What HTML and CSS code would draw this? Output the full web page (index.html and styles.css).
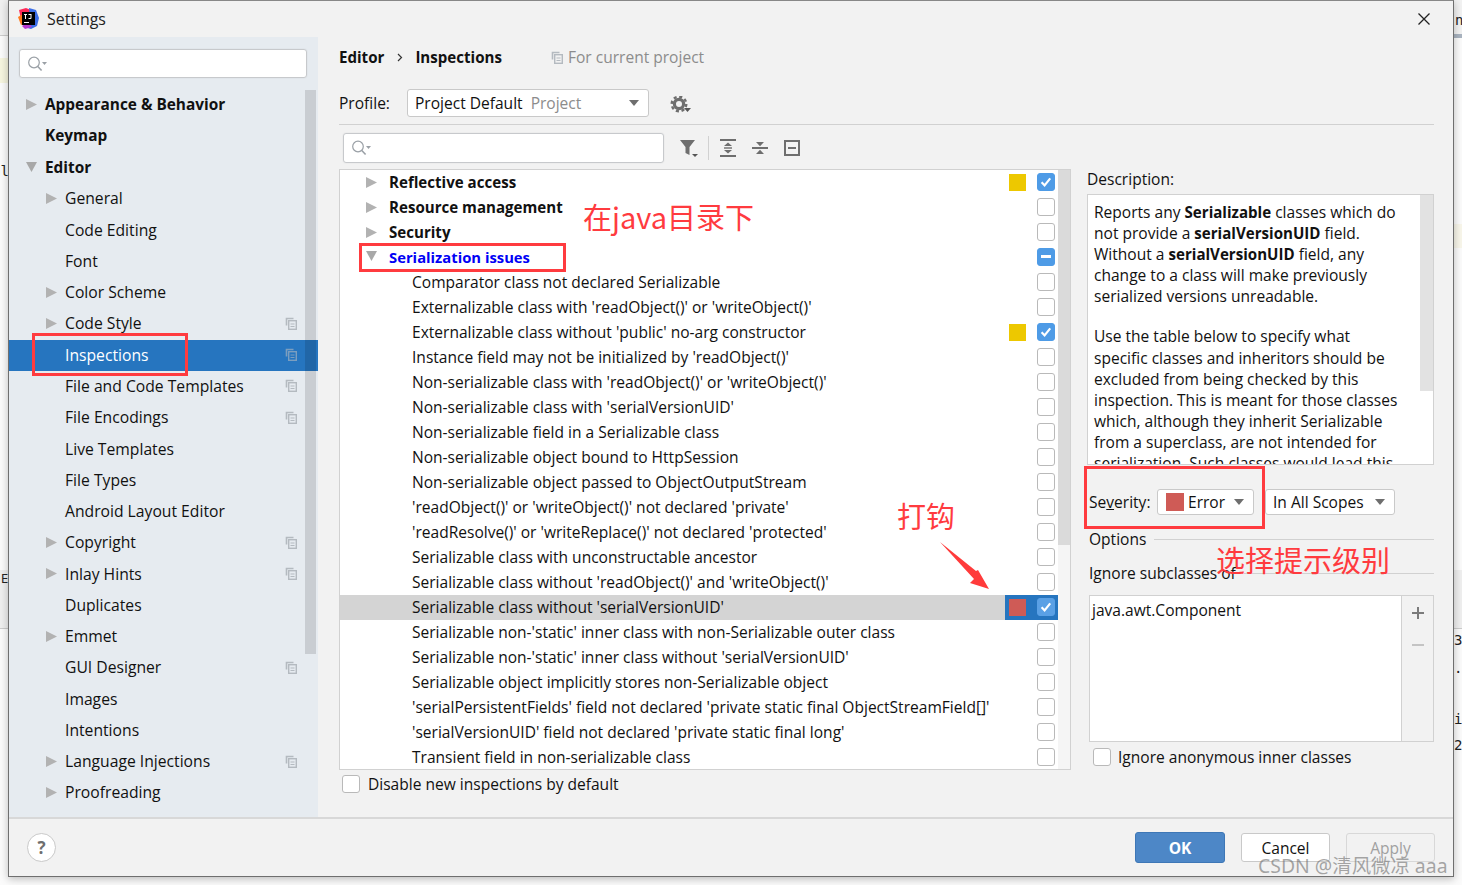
FILE: index.html
```html
<!DOCTYPE html>
<html lang="en">
<head>
<meta charset="utf-8">
<title>Settings</title>
<link rel="stylesheet" href="styles.css">
</head>
<body>
<svg class="defs" width="0" height="0">
  <defs>
    <symbol id="copy" viewBox="0 0 12 13"><path d="M1.5 8.5V1.5H8.5" fill="none" stroke="#b4bac0" stroke-width="1.6"/><rect x="3.7" y="3.7" width="7.6" height="8.6" fill="none" stroke="#b4bac0" stroke-width="1.4"/><path d="M5.5 7h4M5.5 9.5h4" stroke="#b4bac0" stroke-width="1.2"/></symbol>
    <symbol id="search" viewBox="0 0 20 16"><circle cx="7" cy="6.5" r="5.3" fill="none" stroke="#9aa0a6" stroke-width="1.2"/><path d="M10.8 10.5l3.8 4" stroke="#9aa0a6" stroke-width="1.6"/><path d="M15 6h5l-2.5 3z" fill="#9aa0a6"/></symbol>
    <symbol id="right" viewBox="0 0 11 11"><path d="M0 0l11 5.5L0 11z" fill="#b2b2b2"/></symbol>
    <symbol id="down" viewBox="0 0 11 11"><path d="M0 0h11L5.5 10z" fill="#a8a8a8"/></symbol>
    <symbol id="check" viewBox="0 0 18 18"><path d="M4.6 9.2l3 3.2 5.6-7" fill="none" stroke="#fff" stroke-width="2.2"/></symbol>
  </defs>
</svg>
<div class="desk">
  <div class="bg bg-top-l"></div><div class="bg bg-yellow-l"></div><div class="bg bg-tab-l"></div>
  <div class="bg bg-top-r"></div><div class="bg bg-yellow-r"></div><div class="bg bg-tab-r"></div>
  <span class="bgt t-nl">nl</span><span class="bgt t-e">E</span><span class="bgt t-n">n</span>
  <span class="bgt t-3">3</span><span class="bgt t-dot">.</span><span class="bgt t-i">i</span><span class="bgt t-2">2</span>

  <div class="dialog">
    <header class="titlebar">
      <svg class="logo" width="21" height="21" viewBox="0 0 21 21">
        <path d="M1 2l7-2 5 2-3 8-7 1z" fill="#fe2857"/>
        <path d="M0 9l5-3 4 9-6 2z" fill="#ff7a1c"/>
        <path d="M11 0l7 2 3 8-2 8-6 3-7-2 6-8z" fill="#3c6ee6"/>
        <path d="M4 18l6-4 4 5-7 2z" fill="#b63bd0"/>
        <rect x="4" y="4" width="13" height="13" fill="#000"/>
        <path d="M6 6h3v1H8v4H7V7H6zM10.5 6h3v4q0 1-1 1h-2v-1h2V6.900h-2z" fill="#fff"/>
        <rect x="6" y="14" width="5" height="1" fill="#fff"/>
      </svg>
      <span class="title">Settings</span>
      <svg class="close" width="14" height="14" viewBox="0 0 14 14"><path d="M1.500 1.500l11 11M12.500 1.500l-11 11" stroke="#222" stroke-width="1.300"/></svg>
    </header>

    <div class="body">
      <aside class="side">
        <div class="searchbox side-search"><svg width="20" height="16"><use href="#search"/></svg></div>
        <div class="tree">
          <div class="scroll-side"></div>
          <div class="node b"><svg class="arrow"><use href="#right"/></svg>Appearance &amp; Behavior</div>
          <div class="node b">Keymap</div>
          <div class="node b"><svg class="arrow"><use href="#down"/></svg>Editor</div>
          <div class="node c"><svg class="arrow"><use href="#right"/></svg>General</div>
          <div class="node c">Code Editing</div>
          <div class="node c">Font</div>
          <div class="node c"><svg class="arrow"><use href="#right"/></svg>Color Scheme</div>
          <div class="node c"><svg class="arrow"><use href="#right"/></svg>Code Style<svg class="copy"><use href="#copy"/></svg></div>
          <div class="node c sel">Inspections<svg class="copy"><use href="#copy"/></svg></div>
          <div class="node c">File and Code Templates<svg class="copy"><use href="#copy"/></svg></div>
          <div class="node c">File Encodings<svg class="copy"><use href="#copy"/></svg></div>
          <div class="node c">Live Templates</div>
          <div class="node c">File Types</div>
          <div class="node c">Android Layout Editor</div>
          <div class="node c"><svg class="arrow"><use href="#right"/></svg>Copyright<svg class="copy"><use href="#copy"/></svg></div>
          <div class="node c"><svg class="arrow"><use href="#right"/></svg>Inlay Hints<svg class="copy"><use href="#copy"/></svg></div>
          <div class="node c">Duplicates</div>
          <div class="node c"><svg class="arrow"><use href="#right"/></svg>Emmet</div>
          <div class="node c">GUI Designer<svg class="copy"><use href="#copy"/></svg></div>
          <div class="node c">Images</div>
          <div class="node c">Intentions</div>
          <div class="node c"><svg class="arrow"><use href="#right"/></svg>Language Injections<svg class="copy"><use href="#copy"/></svg></div>
          <div class="node c"><svg class="arrow"><use href="#right"/></svg>Proofreading</div>
        </div>
      </aside>

      <main class="main">
        <div class="crumbs">
          <strong>Editor</strong>
          <svg class="chev" width="6" height="9" viewBox="0 0 6 9"><path d="M1 1l3.500 3.500L1 8" fill="none" stroke="#333" stroke-width="1.200"/></svg>
          <strong>Inspections</strong>
          <svg class="copy crumb-copy"><use href="#copy"/></svg>
          <span class="muted">For current project</span>
        </div>
        <div class="profile">
          <span class="profile-label">Profile:</span>
          <div class="combo profile-combo"><span>Project Default</span><span class="muted">Project</span><i class="caret"></i></div>
          <svg class="gear" width="22" height="20" viewBox="0 0 22 20"><circle cx="9" cy="8" r="4.600" fill="none" stroke="#6e6e6e" stroke-width="3.200"/><circle cx="9" cy="8" r="7.300" fill="none" stroke="#6e6e6e" stroke-width="2.400" stroke-dasharray="3.100 2.630"/><path d="M14 12h7l-3.500 4z" fill="#555"/></svg>
        </div>
        <div class="columns">
          <section class="left">
            <div class="toolbar">
              <div class="searchbox list-search"><svg width="20" height="16"><use href="#search"/></svg></div>
              <svg class="tool filter" width="20" height="20" viewBox="0 0 20 20"><path d="M1 2h15l-5.500 7v8l-4-2V9z" fill="#6e6e6e"/><path d="M13 16h6l-3 3z" fill="#555"/></svg>
              <i class="tool-sep"></i>
              <svg class="tool" width="16" height="18" viewBox="0 0 16 18"><path d="M0 1h16M0 17h16" stroke="#6e6e6e" stroke-width="2"/><path d="M8 3.500l4 3.500H4zM8 14.500l4-3.500H4z" fill="#6e6e6e"/><path d="M4 9h8" stroke="#6e6e6e" stroke-width="1.400"/></svg>
              <svg class="tool" width="16" height="18" viewBox="0 0 16 18"><path d="M0 9h16" stroke="#6e6e6e" stroke-width="2"/><path d="M8 7.200L4 3h8zM8 10.800l4 4.200H4z" fill="#6e6e6e"/></svg>
              <svg class="tool" width="16" height="16" viewBox="0 0 16 16"><rect x="1" y="1" width="14" height="14" fill="none" stroke="#6e6e6e" stroke-width="2"/><path d="M4 8h8" stroke="#6e6e6e" stroke-width="2"/></svg>
            </div>
            <div class="list">
              <div class="row g"><svg class="arrow"><use href="#right"/></svg><span class="label">Reflective access</span><i class="sq warn"></i><i class="cb on"><svg><use href="#check"/></svg></i></div>
              <div class="row g"><svg class="arrow"><use href="#right"/></svg><span class="label">Resource management</span><i class="cb"></i></div>
              <div class="row g"><svg class="arrow"><use href="#right"/></svg><span class="label">Security</span><i class="cb"></i></div>
              <div class="row g blue"><svg class="arrow"><use href="#down"/></svg><span class="label">Serialization issues</span><i class="cb on"><b class="dash"></b></i></div>
              <div class="row"><span class="label">Comparator class not declared Serializable</span><i class="cb"></i></div>
              <div class="row"><span class="label">Externalizable class with 'readObject()' or 'writeObject()'</span><i class="cb"></i></div>
              <div class="row"><span class="label">Externalizable class without 'public' no-arg constructor</span><i class="sq warn"></i><i class="cb on"><svg><use href="#check"/></svg></i></div>
              <div class="row"><span class="label">Instance field may not be initialized by 'readObject()'</span><i class="cb"></i></div>
              <div class="row"><span class="label">Non-serializable class with 'readObject()' or 'writeObject()'</span><i class="cb"></i></div>
              <div class="row"><span class="label">Non-serializable class with 'serialVersionUID'</span><i class="cb"></i></div>
              <div class="row"><span class="label">Non-serializable field in a Serializable class</span><i class="cb"></i></div>
              <div class="row"><span class="label">Non-serializable object bound to HttpSession</span><i class="cb"></i></div>
              <div class="row"><span class="label">Non-serializable object passed to ObjectOutputStream</span><i class="cb"></i></div>
              <div class="row"><span class="label">'readObject()' or 'writeObject()' not declared 'private'</span><i class="cb"></i></div>
              <div class="row"><span class="label">'readResolve()' or 'writeReplace()' not declared 'protected'</span><i class="cb"></i></div>
              <div class="row"><span class="label">Serializable class with unconstructable ancestor</span><i class="cb"></i></div>
              <div class="row"><span class="label">Serializable class without 'readObject()' and 'writeObject()'</span><i class="cb"></i></div>
              <div class="row cur"><span class="label">Serializable class without 'serialVersionUID'</span><span class="cur-tail"><i class="sq err"></i><i class="cb on cur-cb"><svg><use href="#check"/></svg></i></span></div>
              <div class="row"><span class="label">Serializable non-'static' inner class with non-Serializable outer class</span><i class="cb"></i></div>
              <div class="row"><span class="label">Serializable non-'static' inner class without 'serialVersionUID'</span><i class="cb"></i></div>
              <div class="row"><span class="label">Serializable object implicitly stores non-Serializable object</span><i class="cb"></i></div>
              <div class="row"><span class="label">'serialPersistentFields' field not declared 'private static final ObjectStreamField[]'</span><i class="cb"></i></div>
              <div class="row"><span class="label">'serialVersionUID' field not declared 'private static final long'</span><i class="cb"></i></div>
              <div class="row"><span class="label">Transient field in non-serializable class</span><i class="cb"></i></div>
              <div class="list-scroll"></div>
            </div>
            <label class="check-line disable"><i class="cb"></i>Disable new inspections by default</label>
          </section>

          <section class="right">
            <div class="desc-label">Description:</div>
            <div class="desc">
              <div class="desc-text">
                <p>Reports any <b>Serializable</b> classes which do not provide a <b>serialVersionUID</b> field. Without a <b>serialVersionUID</b> field, any change to a class will make previously serialized versions unreadable.</p>
                <p>Use the table below to specify what specific classes and inheritors should be excluded from being checked by this inspection. This is meant for those classes which, although they inherit Serializable from a superclass, are not intended for serialization. Such classes would lead this</p>
              </div>
              <div class="desc-scroll"></div>
            </div>
            <div class="severity">
              <span>Se<u>v</u>erity:</span>
              <div class="combo sev-combo"><i class="sq err big"></i><span>Error</span><i class="caret"></i></div>
              <div class="combo scope-combo"><span>In All Scopes</span><i class="caret"></i></div>
            </div>
            <div class="titled options"><span>Options</span><i></i></div>
            <div class="titled ignore"><span>Ignore subclasses of</span><i></i></div>
            <div class="table">
              <div class="table-body">java.awt.Component</div>
              <div class="table-tools">
                <svg width="14" height="14" viewBox="0 0 14 14"><path d="M7 1v12M1 7h12" stroke="#7b7b7b" stroke-width="2"/></svg>
                <svg width="14" height="14" viewBox="0 0 14 14"><path d="M1 7h12" stroke="#c4c4c4" stroke-width="2"/></svg>
              </div>
            </div>
            <label class="check-line anon"><i class="cb"></i>Ignore anonymous inner classes</label>
          </section>
        </div>
      </main>
    </div>

    <footer class="footer">
      <div class="help">?</div>
      <div class="buttons">
        <button class="btn ok">OK</button>
        <button class="btn">Cancel</button>
        <button class="btn off">Apply</button>
      </div>
    </footer>
  </div>

  <div class="mark m-insp"></div>
  <div class="mark m-ser"></div>
  <div class="mark m-sev"></div>
  <span class="note n-java">在java目录下</span>
  <span class="note n-check">打钩</span>
  <span class="note n-level">选择提示级别</span>
  <svg class="note-arrow" width="56" height="56" viewBox="0 0 56 56"><path d="M1 1L37 30l2-1 11 19-19-6 4-4z" fill="#ff3b3b"/></svg>
  <span class="watermark">CSDN @清风微凉 aaa</span>
</div>
</body>
</html>
```

FILE: styles.css
```css
* { box-sizing: border-box; }
html, body { margin: 0; padding: 0; }
body { width: 1462px; height: 885px; overflow: hidden; background: #fff; font-family: "Open Sans", "Noto Sans", sans-serif; font-size: 15.55px; color: #111; }
b, strong { font-size: 15.1px; }
.defs { position: absolute; }
.desk { position: relative; width: 1462px; height: 885px; overflow: hidden; background: #fbfbfb; }

.bg { position: absolute; }
.bg-top-l { left: 0; top: 0; width: 9px; height: 36px; background: #f0f0f0; border-bottom: 1px solid #ccc; }
.bg-yellow-l { left: 0; top: 58px; width: 9px; height: 25px; background: #f6f5df; }
.bg-tab-l { left: 0; top: 570px; width: 9px; height: 59px; background: #efefef; border-bottom: 1px solid #ccc; }
.bg-top-r { left: 1454px; top: 0; width: 8px; height: 38px; background: #f2f2f2; border-bottom: 4px solid #a9b4c0; }
.bg-yellow-r { left: 1454px; top: 224px; width: 8px; height: 24px; background: #f8f6ea; }
.bg-tab-r { left: 1454px; top: 570px; width: 8px; height: 59px; background: #efefef; border-bottom: 1px solid #ccc; }
.bgt { position: absolute; font-family: "DejaVu Sans Mono", monospace; font-size: 14px; line-height: 16px; color: #222; }
.t-nl { left: 0; top: 163px; width: 9px; overflow: hidden; direction: rtl; }
.t-e { left: 1px; top: 571px; font-size: 12px; }
.t-n { left: 1455px; top: 12px; }
.t-3 { left: 1454px; top: 632px; }
.t-dot { left: 1454px; top: 660px; }
.t-i { left: 1454px; top: 711px; }
.t-2 { left: 1454px; top: 737px; }

.dialog { position: absolute; left: 8px; top: 0; width: 1446px; height: 877px; display: flex; flex-direction: column; background: #f2f2f2; border: 1px solid #6f6f6f; border-top-color: #888; box-shadow: 0 2px 8px rgba(0,0,0,.25); }

.titlebar { height: 36px; flex: none; display: flex; align-items: center; padding: 0 22px 0 9px; }
.logo { flex: none; margin-top: -2px; }
.title { margin-left: 8px; font-size: 15.9px; color: #222; }
.close { margin-left: auto; }

.body { height: 780px; flex: none; display: flex; }
.side { width: 309px; flex: none; background: #e6ebf0; display: flex; flex-direction: column; overflow: hidden; font-size: 15.7px; }
.searchbox { background: #fff; border: 1px solid #c7c9cc; border-radius: 3px; display: flex; align-items: center; padding-left: 7px; box-shadow: 0 0 0 1px rgba(0,0,0,.02); }
.side-search { width: 288px; height: 29px; margin: 12px 0 0 10px; flex: none; }
.tree { position: relative; margin-top: 12px; flex: 1; overflow: hidden; }
.scroll-side { position: absolute; right: 2px; top: 0; width: 11px; height: 564px; background: rgba(0,0,0,.125); z-index: 2; }
.node { height: 31.27px; display: flex; align-items: center; position: relative; white-space: nowrap; padding-bottom: 2px; }
.node.b { padding-left: 36px; font-weight: 700; font-size: 15.4px; }
.node.c { padding-left: 56px; }
.node .arrow { position: absolute; width: 11px; height: 11px; top: 9px; }
.node.b .arrow { left: 17px; }
.node.c .arrow { left: 37px; }
.node .copy { position: absolute; width: 12px; height: 13px; left: 276px; top: 8px; z-index: 3; }
.node.sel { background: #2675bf; color: #fff; }
.node.sel .copy { opacity: .6; }

.main { flex: 1; padding: 0 19px 0 21px; display: flex; flex-direction: column; min-width: 0; }
.crumbs { height: 40px; display: flex; align-items: center; flex: none; }
.chev { margin: 0 12px 0 13px; }
.crumb-copy { width: 12px; height: 13px; margin: 0 5px 0 49px; }
.muted { color: #8c8c8c; }
.profile { display: flex; align-items: center; border-bottom: 1px solid #d1d1d1; flex: none; margin-top: 5px; padding-bottom: 1px; height: 43px; }
.profile-label { width: 68px; }
.combo { background: #fff; border: 1px solid #c9c9c9; border-radius: 3px; display: flex; align-items: center; position: relative; white-space: nowrap; }
.caret { position: absolute; border-left: 5.5px solid transparent; border-right: 5.5px solid transparent; border-top: 6px solid #6e6e6e; top: 50%; margin-top: -3px; }
.profile-combo { width: 242px; height: 28px; padding-left: 7px; gap: 8px; }
.profile-combo .caret { right: 9px; }
.gear { margin: 6px 0 0 21px; }

.columns { flex: 1; display: flex; min-height: 0; }
.left { width: 732px; flex: none; display: flex; flex-direction: column; }
.toolbar { height: 44px; display: flex; align-items: center; padding: 0 0 0 4px; flex: none; }
.list-search { width: 321px; height: 30px; flex: none; margin-top: 1px; }
.filter { margin-left: 15px; }
.tool-sep { width: 1px; height: 24px; background: #d1d1d1; margin: 2px 11px 0 9px; }
.tool { margin: 2px 16px 0 0; flex: none; }
.filter { margin-right: 0; margin-left: 15px; }

.list { position: relative; height: 601px; flex: none; background: #fff; border: 1px solid #d1d1d1; padding-right: 12px; overflow: hidden; }
.list::after { content: ""; position: absolute; right: 0; top: 0; bottom: 0; width: 12px; background: #f5f5f5; }
.list-scroll { position: absolute; right: 0; top: 0; width: 12px; height: 375px; background: #dadada; z-index: 1; }
.row { height: 25px; display: flex; align-items: center; position: relative; white-space: nowrap; padding-bottom: 1px; }
.label { margin-left: 72px; }
.row.g .label { margin-left: 49px; font-weight: 700; font-size: 15.1px; }
.row.blue .label { color: #0000f5; font-size: 14.8px; }
.row .arrow { position: absolute; left: 26px; top: 7px; width: 11px; height: 11px; }
.row.blue .arrow { top: 6px; }
.sq { display: block; width: 17px; height: 17px; flex: none; }
.warn { background: #edc800; }
.err { background: #cf5b56; }
.row > .sq { position: absolute; left: 669px; top: 4px; }
.cb { display: block; width: 18px; height: 18px; flex: none; background: #fff; border: 1px solid #b9b9b9; border-radius: 3px; position: relative; }
.row > .cb { position: absolute; left: 697px; top: 3px; }
.cb.on { background: #4e9be6; border-color: #4e9be6; }
.cb svg { position: absolute; left: -1px; top: -1px; width: 18px; height: 18px; }
.dash { position: absolute; left: 3px; top: 6px; width: 10px; height: 3px; background: #fff; }
.row.cur { background: #d4d4d4; }
.cur-tail { position: absolute; left: 665px; top: 0; width: 53px; height: 25px; background: #2675bf; }
.cur-tail .sq { position: absolute; left: 4px; top: 4px; }
.cur-tail .cb { position: absolute; left: 32px; top: 3px; background: #5aa0e5; border-color: #5aa0e5; }
.check-line { display: flex; align-items: center; white-space: nowrap; }
.disable { height: 28px; margin-left: 3px; gap: 8px; }

.right { flex: 1; margin-left: 16px; min-width: 0; display: flex; flex-direction: column; padding-top: 45px; }
.desc-label { height: 24px; line-height: 18px; flex: none; }
.desc { position: relative; height: 271px; flex: none; background: #fff; border: 1px solid #d1d1d1; overflow: hidden; padding: 7px 0 0 6px; }
.desc-text { width: 310px; line-height: 21.1px; }
.desc-text p { margin: 0 0 19px; }
.desc-scroll { position: absolute; right: 0; top: 0; width: 13px; height: 196px; background: #e2e2e2; }
.severity { height: 74px; flex: none; display: flex; align-items: center; margin-left: 2px; }
.severity span:first-child { width: 68px; }
.sev-combo { width: 97px; height: 26px; padding-left: 8px; gap: 4px; }
.sq.big { width: 18px; height: 18px; }
.sev-combo .caret { right: 9px; }
.scope-combo { width: 130px; height: 26px; margin-left: 11px; padding-left: 7px; }
.scope-combo .caret { right: 9px; }
.titled { display: flex; align-items: center; margin-left: 2px; flex: none; }
.titled i { flex: 1; height: 1px; background: #d1d1d1; margin-left: 8px; }
.options { height: 20px; margin-top: -10px; }
.ignore { height: 20px; margin-top: 14px; }
.table { display: flex; height: 147px; margin: 12px 0 0 2px; border: 1px solid #d1d1d1; flex: none; }
.table-body { width: 312px; background: #fff; padding: 3px 0 0 2px; border-right: 1px solid #d1d1d1; }
.table-tools { flex: 1; display: flex; flex-direction: column; align-items: center; gap: 18px; padding-top: 10px; }
.anon { margin: 5px 0 0 6px; height: 20px; gap: 7px; }

.footer { flex: 1; border-top: 2px solid #d8d8d8; display: flex; align-items: center; justify-content: space-between; padding: 0 18px; background: #f2f2f2; }
.help { width: 29px; height: 29px; border-radius: 50%; background: #fff; border: 1px solid #c9c9c9; display: flex; align-items: center; justify-content: center; font-weight: 700; font-size: 17px; color: #6e6e6e; }
.buttons { display: flex; gap: 16px; align-items: center; }
.btn { width: 89px; height: 29px; background: #fff; border: 1px solid #c9c9c9; border-radius: 3px; font: inherit; color: #111; padding: 0; }
.btn.ok { width: 90px; height: 31px; background: #4d87c7; border-color: #3e77b6; color: #fff; font-weight: 700; }
.btn.off { background: #f2f2f2; border-color: #d8d8d8; color: #a0a0a0; }

.mark { position: absolute; border: 3px solid #ff3b3f; pointer-events: none; }
.m-insp { left: 32px; top: 333px; width: 156px; height: 43px; }
.m-ser { left: 359px; top: 243px; width: 207px; height: 29px; }
.m-sev { left: 1084px; top: 466px; width: 181px; height: 63px; }
.note { position: absolute; color: #ff3b3f; font-family: "Noto Sans CJK SC", "Noto Sans", sans-serif; font-size: 29px; line-height: 34px; white-space: nowrap; }
.n-java { left: 583px; top: 199px; }
.n-check { left: 897px; top: 498px; }
.n-level { left: 1216px; top: 542px; }
.note-arrow { position: absolute; left: 939px; top: 541px; }
.watermark { position: absolute; left: 1258px; top: 854px; font-family: "Noto Sans", "Noto Sans CJK SC", sans-serif; font-size: 19.4px; line-height: 24px; color: rgba(110,110,110,.6); white-space: nowrap; }
```
